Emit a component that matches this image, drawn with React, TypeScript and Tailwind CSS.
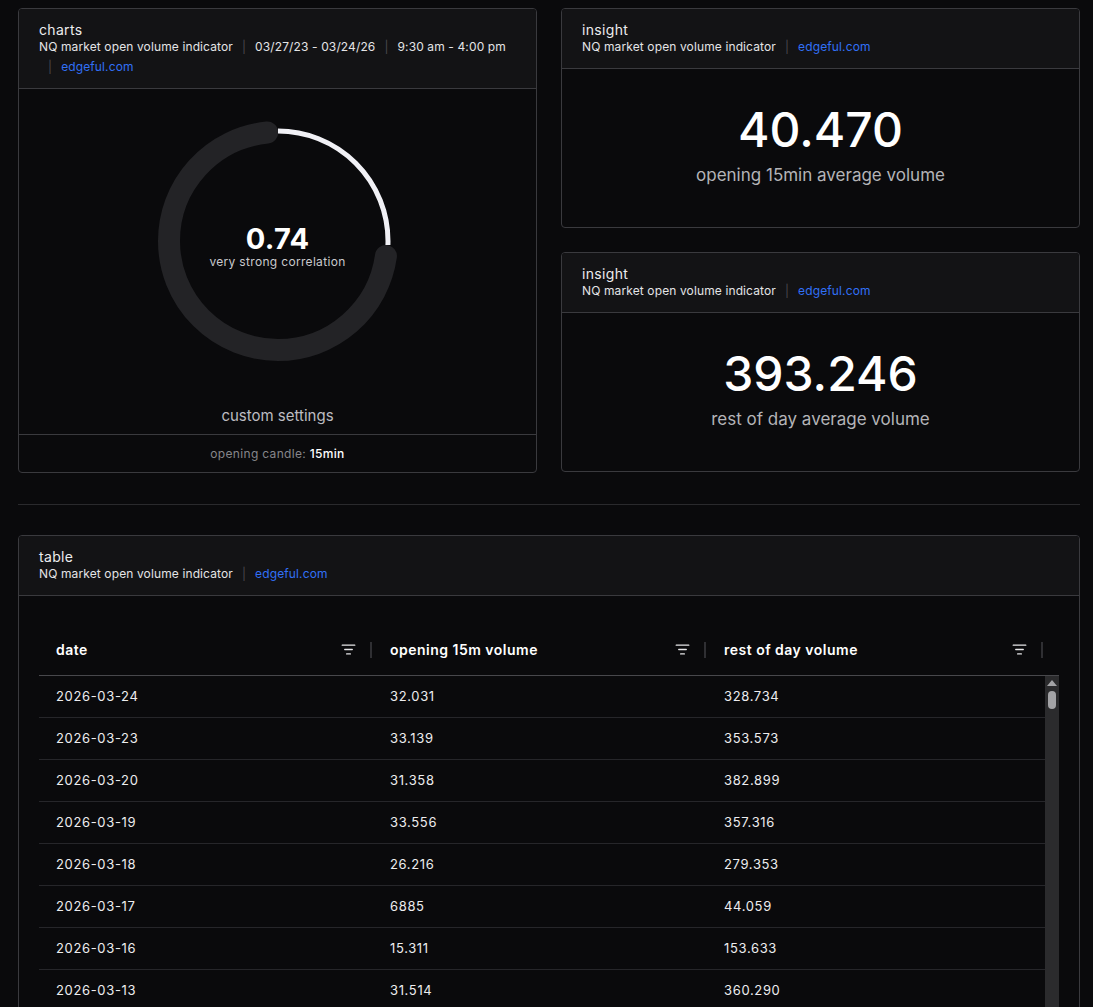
import { ListFilter } from "lucide-react";

const rows = [
  ["2026-03-24", "32.031", "328.734"],
  ["2026-03-23", "33.139", "353.573"],
  ["2026-03-20", "31.358", "382.899"],
  ["2026-03-19", "33.556", "357.316"],
  ["2026-03-18", "26.216", "279.353"],
  ["2026-03-17", "6885", "44.059"],
  ["2026-03-16", "15.311", "153.633"],
  ["2026-03-13", "31.514", "360.290"],
  ["2026-03-12", "29.807", "341.118"],
  ["2026-03-11", "30.442", "366.025"],
];

function CardHeader({ title, items }: { title: string; items: string[] }) {
  return (
    <div className="border-b border-[#3a3a3e] bg-[#131315] px-5 pt-[11px] pb-[13px]">
      <div className="text-[14px] leading-5 text-[#ececee]">{title}</div>
      <div className="-mt-px flex flex-wrap gap-y-1 text-[12px] leading-4 tracking-[0.01em] text-[#e4e4e6]">
        {items.map((item, i) => (
          <span key={item} className="flex items-center">
            {i > 0 && <span className="mx-[9px] text-[#4a4a4e]">|</span>}
            <span className={i === items.length - 1 ? "text-[#3170f6]" : ""}>{item}</span>
          </span>
        ))}
      </div>
    </div>
  );
}

function Donut() {
  const r = 109;
  const c = 2 * Math.PI * r;
  return (
    <svg width="240" height="240" viewBox="0 0 240 240">
      <g transform="rotate(-90 120 120)">
        <circle
          cx="120"
          cy="120"
          r={r}
          fill="none"
          stroke="#232326"
          strokeWidth="22"
          strokeLinecap="round"
          strokeDasharray={`${c * 0.711} ${c}`}
          strokeDashoffset={-c * 0.272}
        />
        <circle
          cx="120"
          cy="120"
          r={r + 1}
          fill="none"
          stroke="#f1f1f6"
          strokeWidth="5"
          strokeDasharray={`${c * 0.258} ${c * 2}`}
        />
      </g>
    </svg>
  );
}

function Insight({ value, label }: { value: string; label: string }) {
  return (
    <div className="flex h-[220px] flex-col overflow-hidden rounded border border-[#3a3a3e] bg-[#0a0a0c]">
      <CardHeader title="insight" items={["NQ market open volume indicator", "edgeful.com"]} />
      <div className="flex flex-1 flex-col items-center justify-center pb-[7px]">
        <div className="text-[48px] font-medium leading-[56px] tracking-normal text-white">{value}</div>
        <div className="mt-[5px] text-[17px] leading-6 tracking-normal text-[#b4b4b8]">{label}</div>
      </div>
    </div>
  );
}

export default function App() {
  return (
    <div className="min-h-screen bg-[#0a0a0c] pt-2 pr-[13px] pl-[18px] pb-10 font-['Inter','Open_Sans',sans-serif] tracking-[0.02em]">
      <div className="grid grid-cols-2 gap-6">
        <div className="flex flex-col overflow-hidden rounded border border-[#3a3a3e] bg-[#0a0a0c]">
          <CardHeader
            title="charts"
            items={["NQ market open volume indicator", "03/27/23 - 03/24/26", "9:30 am - 4:00 pm", "edgeful.com"]}
          />
          <div className="flex flex-col items-center pt-[32px] pb-[8px]">
            <div className="relative">
              <Donut />
              <div className="absolute inset-0 flex flex-col items-center justify-center pt-[10px]">
                <div className="text-[29px] font-bold leading-8 tracking-[0.01em] text-white">0.74</div>
                <div className="mt-[-1px] text-[12px] leading-4 text-[#c9c9cd]">very strong correlation</div>
              </div>
            </div>
            <div className="mt-[45px] text-[15px] leading-5 tracking-normal text-[#bdbdc1]">custom settings</div>
          </div>
          <div className="flex h-[38px] items-center justify-center border-t border-[#3a3a3e] text-[12px] text-[#86868a]">
            opening candle:&nbsp;<span className="font-medium text-white">15min</span>
          </div>
        </div>
        <div className="flex flex-col gap-6">
          <Insight value="40.470" label="opening 15min average volume" />
          <Insight value="393.246" label="rest of day average volume" />
        </div>
      </div>

      <div className="mt-[31px] mb-[30px] h-px bg-[#2a2a2d]" />

      <div className="overflow-hidden rounded border border-[#3a3a3e] bg-[#0a0a0c]">
        <CardHeader title="table" items={["NQ market open volume indicator", "edgeful.com"]} />
        <div className="px-5 pt-[28px] pb-5">
          <div className="grid h-[52px] grid-cols-[333px_334px_1fr] border-b border-[#48484c] pr-[16px]">
            {["date", "opening 15m volume", "rest of day volume"].map((h, i) => (
              <div key={h} className={`flex items-center ${i === 0 ? "pl-[17px]" : "pl-[18px]"}`}>
                <span className="flex-1 text-[14px] font-semibold tracking-[0.035em] text-white">{h}</span>
                <ListFilter size={15} strokeWidth={2.2} className="text-[#e6e6e8]" />
                <span className="ml-[14px] h-4 w-[2px] bg-[#2f2f33]" />
              </div>
            ))}
          </div>
          <div className="flex h-[420px] overflow-hidden">
            <div className="flex-1">
              {rows.map((row) => (
                <div key={row[0]} className="grid h-[42px] grid-cols-[333px_334px_1fr] border-b border-[#26262a]">
                  {row.map((cell, i) => (
                    <div
                      key={i}
                      className={`flex items-center text-[13px] tracking-[0.05em] text-[#ededef] ${i === 0 ? "pl-[17px]" : "pl-[18px]"}`}
                    >
                      {cell}
                    </div>
                  ))}
                </div>
              ))}
            </div>
            <div className="flex w-[14px] flex-col items-center bg-[#2b2b2d] pt-[4px]">
              <div className="h-0 w-0 border-x-[5px] border-b-[6px] border-x-transparent border-b-[#a3a3a6]" />
              <div className="mt-[5px] h-[18px] w-[8px] rounded-full bg-[#a3a3a6]" />
            </div>
          </div>
        </div>
      </div>
    </div>
  );
}
